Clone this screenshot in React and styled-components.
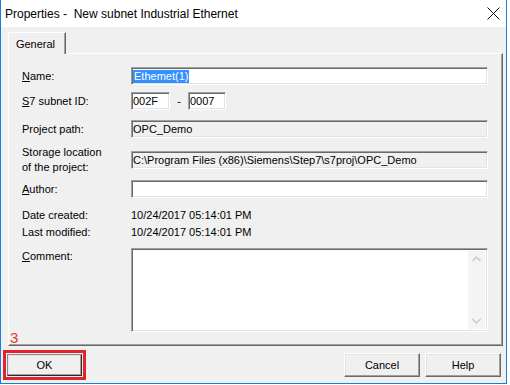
import React from "react";
import styled, { createGlobalStyle } from "styled-components";

const GlobalStyle = createGlobalStyle`
  html, body {
    margin: 0;
    padding: 0;
    background: #ffffff;
  }
  body {
    font-family: "Liberation Sans", Arial, sans-serif;
    color: #000;
  }
  * {
    box-sizing: border-box;
  }
`;

const Window = styled.div`
  position: relative;
  width: 507px;
  height: 384px;
  display: flex;
  flex-direction: column;
  background: #f0f0f0;
  border-left: 1px solid #1a7fd4;
  border-right: 1px solid #1a7fd4;
  border-bottom: 1px solid #1a7fd4;
`;

const TitleBar = styled.div`
  height: 27px;
  display: flex;
  align-items: center;
  justify-content: space-between;
  padding: 0 6px 0 4px;
  background: #ffffff;
  font-size: 12px;
`;

const Title = styled.span`
  white-space: pre;
`;

const Close = styled.div`
  width: 13px;
  height: 13px;
  display: flex;
`;

const Body = styled.div`
  flex: 1;
  display: flex;
  flex-direction: column;
  padding: 5px 3px 0 7px;
  font-size: 11px;
`;

const Tabs = styled.div`
  display: flex;
  margin-bottom: -1px;
  position: relative;
  z-index: 1;
`;

const Tab = styled.div`
  width: 58px;
  height: 22px;
  display: flex;
  align-items: center;
  justify-content: center;
  padding-right: 3px;
  background: #f0f0f0;
  border-top: 1px solid #ffffff;
  border-left: 1px solid #ffffff;
  border-right: 1px solid #696969;
  box-shadow: inset -1px 0 #a0a0a0;
`;

const Panel = styled.div`
  display: flex;
  flex-direction: column;
  padding: 13px 14px 13px 13px;
  border: 1px solid;
  border-color: #ffffff #696969 #696969 #ffffff;
  box-shadow: inset -1px -1px #a0a0a0;
`;

const Row = styled.div`
  display: flex;
  align-items: ${({ $top }) => ($top ? "flex-start" : "center")};
  margin-top: ${({ $gap }) => $gap || 0}px;
`;

const Label = styled.div`
  width: 109px;
  flex-shrink: 0;
  line-height: ${({ $lh }) => $lh || 13}px;
  padding-top: ${({ $top }) => ($top ? "2px" : "0")};
`;

const Field = styled.div`
  width: ${({ $w }) => $w || 357}px;
  height: ${({ $h }) => $h || 18}px;
  display: flex;
  align-items: center;
  padding-left: 1px;
  white-space: nowrap;
  overflow: hidden;
  background: ${({ $readOnly }) => ($readOnly ? "#f0f0f0" : "#ffffff")};
  border: 1px solid;
  border-color: #a0a0a0 #ffffff #ffffff #a0a0a0;
  box-shadow: inset 1px 1px #696969, inset -1px -1px #e3e3e3;
`;

const Selected = styled.span`
  background: #3390ff;
  color: #ffffff;
  padding: 0 1px;
  line-height: 13px;
`;

const Dash = styled.span`
  width: 18px;
  text-align: center;
`;

const Value = styled.div`
  line-height: 13px;
`;

const CommentBox = styled(Field)`
  align-items: stretch;
  padding: 2px 2px 2px 0;
  justify-content: flex-end;
`;

const Scrollbar = styled.div`
  width: 17px;
  display: flex;
  flex-direction: column;
  justify-content: space-between;
  align-items: center;
  padding: 5px 0;
  background: #f4f4f4;
`;

const Footer = styled.div`
  display: flex;
  align-items: center;
  margin-top: 4px;
  padding: 0 5px 3px 2px;
`;

const Highlight = styled.div`
  border: 3px solid #e2232b;
  padding: 1px;
`;

const Button = styled.div`
  width: ${({ $w }) => $w || 76}px;
  height: ${({ $h }) => $h || 24}px;
  display: flex;
  align-items: center;
  justify-content: center;
  background: #f0f0f0;
  border: 1px solid;
  border-color: ${({ $default }) =>
    $default ? "#8a8a8a #2a2a2a #2a2a2a #8a8a8a" : "#ffffff #696969 #696969 #ffffff"};
  box-shadow: inset -1px -1px #a0a0a0, inset 1px 1px #e3e3e3;
  font-size: 11px;
`;

const Spacer = styled.div`
  flex: 1;
`;

const ButtonGroup = styled.div`
  display: flex;
  gap: 5px;
`;

const Marker = styled.div`
  position: absolute;
  left: 9px;
  top: 330px;
  color: #e53935;
  font-size: 15px;
  line-height: 15px;
`;

function Chevron({ up }) {
  return (
    <svg width="9" height="6" viewBox="0 0 9 6">
      <path
        d={up ? "M0.5 5 L4.5 1 L8.5 5" : "M0.5 1 L4.5 5 L8.5 1"}
        fill="none"
        stroke="#c2c2c2"
        strokeWidth="1.2"
      />
    </svg>
  );
}

export default function App() {
  return (
    <>
      <GlobalStyle />
      <Window>
        <TitleBar>
          <Title>Properties -  New subnet Industrial Ethernet</Title>
          <Close>
            <svg width="13" height="13" viewBox="0 0 13 13">
              <path d="M0.5 0.5 L12.5 12.5 M12.5 0.5 L0.5 12.5" stroke="#111" strokeWidth="1" />
            </svg>
          </Close>
        </TitleBar>
        <Body>
          <Tabs>
            <Tab>General</Tab>
          </Tabs>
          <Panel>
            <Row>
              <Label>
                <u>N</u>ame:
              </Label>
              <Field>
                <Selected>Ethemet(1)</Selected>
              </Field>
            </Row>
            <Row $gap={7}>
              <Label>
                <u>S</u>7 subnet ID:
              </Label>
              <Field $w={39}>002F</Field>
              <Dash>-</Dash>
              <Field $w={38}>0007</Field>
            </Row>
            <Row $gap={10}>
              <Label>Project path:</Label>
              <Field $readOnly>OPC_Demo</Field>
            </Row>
            <Row $gap={7}>
              <Label $lh={15}>
                Storage location
                <br />
                of the project:
              </Label>
              <Field $readOnly>C:\Program Files (x86)\Siemens\Step7\s7proj\OPC_Demo</Field>
            </Row>
            <Row $gap={5}>
              <Label>
                <u>A</u>uthor:
              </Label>
              <Field />
            </Row>
            <Row $gap={11}>
              <Label>Date created:</Label>
              <Value>10/24/2017 05:14:01 PM</Value>
            </Row>
            <Row $gap={4}>
              <Label>Last modified:</Label>
              <Value>10/24/2017 05:14:01 PM</Value>
            </Row>
            <Row $gap={9} $top>
              <Label $top>
                <u>C</u>omment:
              </Label>
              <CommentBox $h={84}>
                <Scrollbar>
                  <Chevron up />
                  <Chevron />
                </Scrollbar>
              </CommentBox>
            </Row>
          </Panel>
        </Body>
        <Footer>
          <Highlight>
            <Button $w={75} $h={22} $default>
              OK
            </Button>
          </Highlight>
          <Spacer />
          <ButtonGroup>
            <Button>Cancel</Button>
            <Button>Help</Button>
          </ButtonGroup>
        </Footer>
        <Marker>3</Marker>
      </Window>
    </>
  );
}
